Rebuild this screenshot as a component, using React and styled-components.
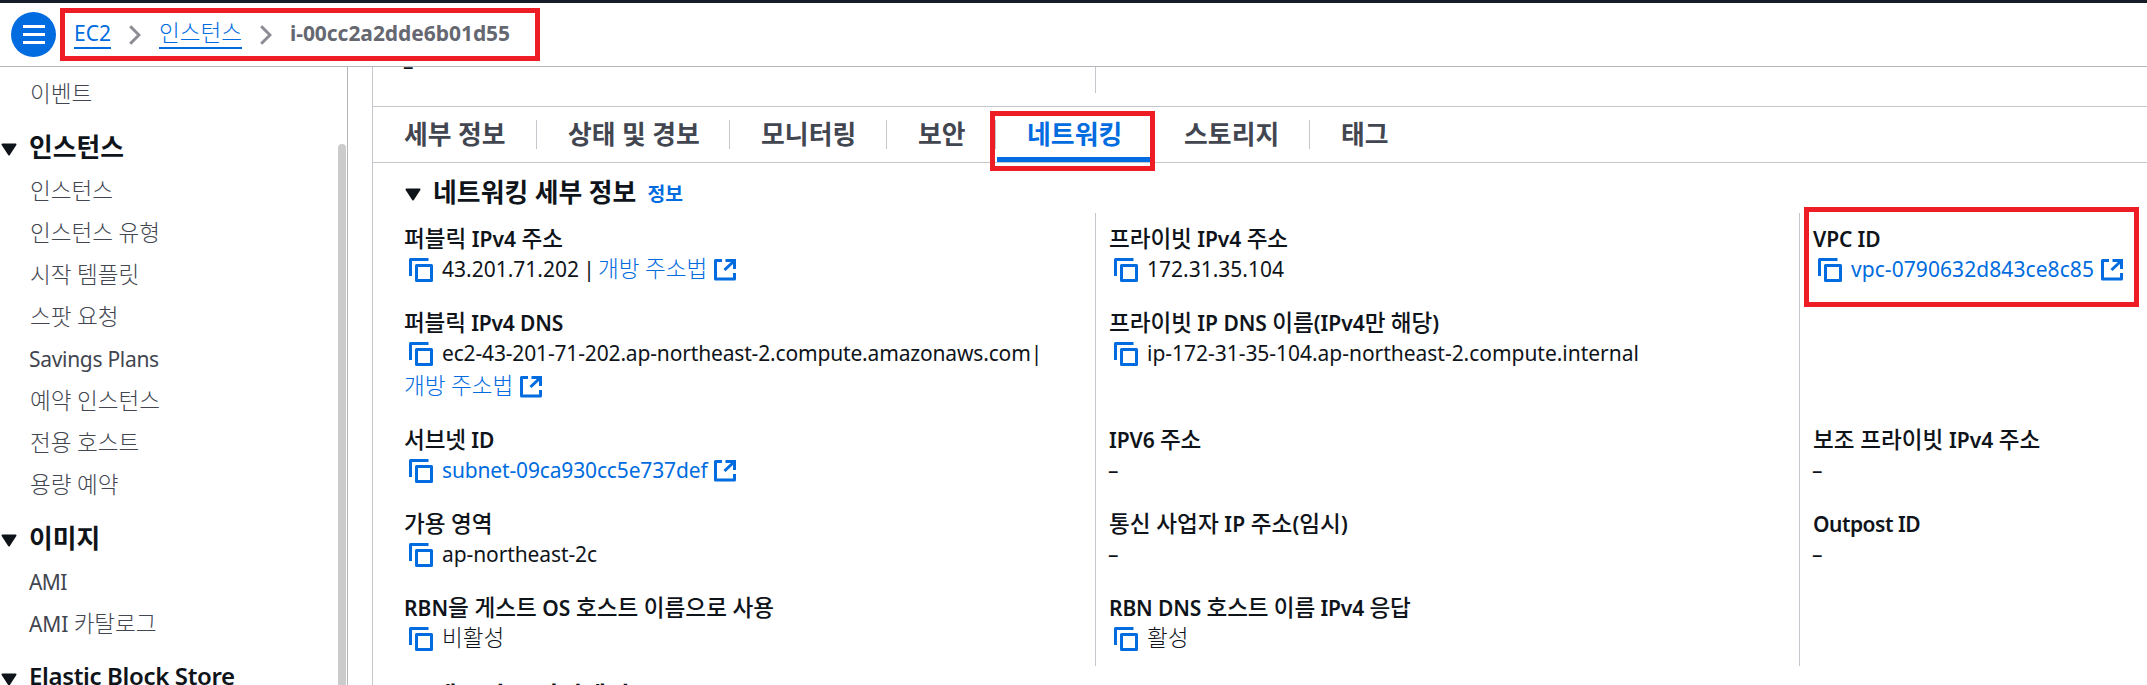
import React from "react";
import styled, { createGlobalStyle } from "styled-components";

const Global = createGlobalStyle`
  * { box-sizing: border-box; }
  body { margin: 0; background: #fff; }
`;

const Page = styled.div`
  position: relative;
  width: 2147px;
  height: 685px;
  overflow: hidden;
  display: flex;
  flex-direction: column;
  background: #fff;
  color: #0f141a;
  font-family: "Noto Sans", "Noto Sans CJK KR", sans-serif;
  font-size: 21px;
  line-height: 32px;
  white-space: nowrap;
`;

/* Mixed Latin and Hangul text */
const Run = styled.span`
  letter-spacing: ${(p) => p.$spacing}px;
`;
const Hangul = styled.span`
  font-family: "Noto Sans CJK KR", sans-serif;
  font-size: 1.075em;
  font-weight: ${(p) => p.$weight};
  line-height: 0;
`;
function Text({ children, spacing = 0, hangul = 300 }) {
  return (
    <Run $spacing={spacing}>
      {children
        .split(/([\uac00-\ud7a3]+)/)
        .filter(Boolean)
        .map((part, i) =>
          /[\uac00-\ud7a3]/.test(part) ? (
            <Hangul key={i} $weight={hangul}>
              {part}
            </Hangul>
          ) : (
            part
          )
        )}
    </Run>
  );
}

/* Top bar */
const TopBar = styled.header`
  flex: none;
  height: 67px;
  display: flex;
  align-items: flex-start;
  border-top: 3px solid #161d26;
  border-bottom: 1px solid #b4b4bb;
  padding-left: 11px;
`;
const MenuButton = styled.button`
  width: 45px;
  height: 45px;
  margin: 9px 18px 0 0;
  padding: 0;
  border: 0;
  border-radius: 50%;
  background: #006ce0;
  display: flex;
  align-items: center;
  justify-content: center;
`;
const Crumbs = styled.nav`
  display: flex;
  align-items: flex-start;
  gap: 18px;
  padding-top: 17px;
  line-height: 27px;
`;
const CrumbLink = styled.a`
  color: #006ce0;
  height: 29px;
  border-bottom: 2px solid #006ce0;
`;
const CrumbCurrent = styled.span`
  color: #656871;
  font-weight: 700;
`;
const Chevron = () => (
  <svg width="12" height="20" viewBox="0 0 12 20" fill="none" stroke="#8c8c94" strokeWidth="3">
    <path d="M1.2 1.2 L10 10 L1.2 18.8" />
  </svg>
);
const ChevronSlot = styled.span`
  display: flex;
  padding-top: 5px;
`;

/* Sidebar */
const Body = styled.div`
  flex: 1;
  min-height: 0;
  display: flex;
`;
const Sidebar = styled.aside`
  flex: none;
  width: 348px;
  display: flex;
  justify-content: space-between;
  border-right: 1px solid #b4b4bb;
  overflow: hidden;
`;
const NavList = styled.div`
  padding-top: 6px;
`;
const NavItem = styled.div`
  height: 42px;
  line-height: 42px;
  padding-left: ${(p) => (p.$latin ? 29 : 30)}px;
  color: #424650;
`;
const NavHeading = styled.div`
  height: 55px;
  padding: ${(p) => (p.$latin ? "13px 0 6px 1px" : "15px 0 4px 1px")};
  display: flex;
  align-items: center;
  gap: 12px;
  font-size: 24px;
  font-weight: 600;
  line-height: 36px;
`;
const CaretSlot = styled.span`
  display: flex;
  padding-top: ${(p) => p.$drop}px;
`;
const Caret = ({ drop }) => (
  <CaretSlot $drop={drop}>
    <svg width="16" height="13" viewBox="0 0 16 13">
      <path d="M1.5 1.5 H14.5 L8 11.5 Z" fill="#0f141a" stroke="#0f141a" strokeWidth="2" strokeLinejoin="round" />
    </svg>
  </CaretSlot>
);
const Scrollbar = styled.div`
  width: 8px;
  height: 560px;
  margin: 77px 1px 0 0;
  border-radius: 4px;
  background: #cbcbcb;
`;

/* Details panel */
const Panel = styled.main`
  flex: 1;
  min-width: 0;
  margin-left: 24px;
  border-left: 1px solid #c6c6cd;
  overflow: hidden;
`;
const Summary = styled.div`
  display: flex;
  height: 40px;
  border-bottom: 1px solid #c6c6cd;
  overflow: hidden;
`;
const SummaryCell = styled.div`
  width: 722px;
  padding-left: 30px;
  margin-top: -17px;
`;
const SummaryRule = styled.div`
  width: 1px;
  height: 26px;
  background: #c6c6cd;
`;
const Tabs = styled.div`
  display: flex;
  height: 56px;
  border-bottom: 1px solid #c6c6cd;
`;
const Tab = styled.div`
  width: ${(p) => p.$width}px;
  height: 55px;
  display: flex;
  align-items: center;
  justify-content: space-between;
  padding-left: 31px;
  color: ${(p) => (p.$active ? "#006ce0" : "#424650")};
  background: ${(p) =>
    p.$active ? "linear-gradient(#006ce0, #006ce0) 1px 100% / 154px 5px no-repeat" : "none"};
  font-size: 24px;
  font-weight: 600;
  line-height: 54px;
`;
const TabRule = styled.i`
  width: 1px;
  height: 29px;
  background: #c6c6cd;
`;
const SectionTitle = styled.h2`
  height: 50px;
  margin: 0;
  padding: 10px 0 0 32px;
  display: flex;
  align-items: flex-start;
  font-size: 24px;
  font-weight: 600;
  line-height: 40px;
`;
const TitleText = styled.span`
  margin-left: 12px;
`;
const InfoLink = styled.a`
  margin-left: 11px;
  font-size: 18px;
  color: #006ce0;
  line-height: 42px;
`;
const Columns = styled.div`
  display: grid;
  grid-template-columns: 722px 704px 1fr;
  height: 453px;
  margin-bottom: 1px;
`;
const Column = styled.div`
  padding: 12px 0 12px ${(p) => (p.$first ? 30 : 12)}px;
  border-left: ${(p) => (p.$first ? "0" : "1px solid #c6c6cd")};
  display: grid;
  grid-template-rows: 84px 117px 84px 84px 60px;
`;
const Field = styled.div`
  display: flex;
  flex-direction: column;
`;
const Label = styled.div`
  height: 28px;
  padding-left: 1px;
  line-height: 28px;
  font-weight: 600;
`;
const Value = styled.div`
  height: 32px;
  display: flex;
`;
const ContinuedValue = styled(Value)`
  padding: 1px 0 0 1px;
`;
const Link = styled.a`
  color: #006ce0;
`;
const Bar = styled.span`
  width: 12px;
  margin: 0 3px 0 ${(p) => (p.$spaced ? 4 : 0)}px;
  text-align: center;
`;
const IconSlot = styled.span`
  display: flex;
  margin: ${(p) => p.$margin};
`;
const CopyIcon = () => (
  <IconSlot $margin="5px 9px 0 6px">
    <svg width="24" height="24" viewBox="0 0 24 24" fill="none" stroke="#006ce0" strokeWidth="3" strokeLinejoin="round">
      <path d="M1.5 18 V1.5 H19.5" />
      <rect x="7.5" y="7.5" width="15" height="15" />
    </svg>
  </IconSlot>
);
const ExternalIcon = () => (
  <IconSlot $margin="6px 0 0 7px">
    <svg width="22" height="22" viewBox="0 0 22 22" fill="none" stroke="#006ce0" strokeWidth="3">
      <path d="M8 1.5 H1.5 V20 H20.5 V14" strokeLinejoin="round" />
      <path d="M11.5 1.5 H20.5 V10" />
      <path d="M20 2 L10.5 11" />
    </svg>
  </IconSlot>
);

/* Red annotation frames drawn over the page */
const Highlight = styled.div`
  position: absolute;
  left: ${(p) => p.$x}px;
  top: ${(p) => p.$y}px;
  width: ${(p) => p.$w}px;
  height: ${(p) => p.$h}px;
  border: 5px solid #ee1c24;
`;

const nav = [
  { text: "이벤트" },
  { heading: "인스턴스" },
  { text: "인스턴스" },
  { text: "인스턴스 유형" },
  { text: "시작 템플릿" },
  { text: "스팟 요청" },
  { text: "Savings Plans", spacing: -0.3, latin: true },
  { text: "예약 인스턴스" },
  { text: "전용 호스트" },
  { text: "용량 예약" },
  { heading: "이미지" },
  { text: "AMI", spacing: -0.6, latin: true },
  { text: "AMI 카탈로그", spacing: -0.1, latin: true },
  { heading: "Elastic Block Store", spacing: -0.35, latin: true },
];

const tabs = [
  { text: "세부 정보", width: 164 },
  { text: "상태 및 경보", width: 193 },
  { text: "모니터링", width: 157 },
  { text: "보안", width: 109 },
  { text: "네트워킹", width: 157, active: true },
  { text: "스토리지", width: 157 },
  { text: "태그", width: 110, last: true },
];

const columns = [
  [
    { label: "퍼블릭 IPv4 주소", copy: true, value: "43.201.71.202", openInline: true },
    {
      label: "퍼블릭 IPv4 DNS",
      ls: -0.15,
      copy: true,
      value: "ec2-43-201-71-202.ap-northeast-2.compute.amazonaws.com",
      vs: -0.16,
      openBelow: true,
    },
    { label: "서브넷 ID", ls: -0.1, copy: true, link: "subnet-09ca930cc5e737def", vs: -0.15 },
    { label: "가용 영역", copy: true, value: "ap-northeast-2c", vs: -0.1 },
    { label: "RBN을 게스트 OS 호스트 이름으로 사용", ls: 0.03, copy: true, value: "비활성" },
  ],
  [
    { label: "프라이빗 IPv4 주소", ls: -0.05, copy: true, value: "172.31.35.104" },
    {
      label: "프라이빗 IP DNS 이름(IPv4만 해당)",
      ls: -0.03,
      copy: true,
      value: "ip-172-31-35-104.ap-northeast-2.compute.internal",
      vs: -0.03,
    },
    { label: "IPV6 주소", ls: -0.1, value: "–" },
    { label: "통신 사업자 IP 주소(임시)", ls: 0.08, value: "–" },
    { label: "RBN DNS 호스트 이름 IPv4 응답", ls: -0.12, copy: true, value: "활성" },
  ],
  [
    { label: "VPC ID", ls: -0.1, copy: true, link: "vpc-0790632d843ce8c85", vs: 0.07 },
    null,
    { label: "보조 프라이빗 IPv4 주소", ls: 0.05, value: "–" },
    { label: "Outpost ID", ls: -0.5, value: "–" },
  ],
];

const OpenAddress = () => (
  <>
    <Link>
      <Text>개방 주소법</Text>
    </Link>
    <ExternalIcon />
  </>
);

function FieldView({ field }) {
  if (!field) return <Field />;
  return (
    <Field>
      <Label>
        <Text hangul={500} spacing={field.ls}>
          {field.label}
        </Text>
      </Label>
      <Value>
        {field.copy && <CopyIcon />}
        {field.value && <Text spacing={field.vs}>{field.value}</Text>}
        {field.link && (
          <>
            <Link>
              <Text spacing={field.vs}>{field.link}</Text>
            </Link>
            <ExternalIcon />
          </>
        )}
        {(field.openInline || field.openBelow) && <Bar $spaced={field.openInline}>|</Bar>}
        {field.openInline && <OpenAddress />}
      </Value>
      {field.openBelow && (
        <ContinuedValue>
          <OpenAddress />
        </ContinuedValue>
      )}
    </Field>
  );
}

function Section({ title }) {
  return (
    <SectionTitle>
      <Caret drop={15} />
      <TitleText>
        <Text hangul={700} spacing={0.1}>
          {title}
        </Text>
      </TitleText>
      <InfoLink>
        <Text hangul={700}>정보</Text>
      </InfoLink>
    </SectionTitle>
  );
}

export default function App() {
  return (
    <Page>
      <Global />
      <TopBar>
        <MenuButton aria-label="menu">
          <svg width="22" height="19" viewBox="0 0 22 19" stroke="#fff" strokeWidth="2.8">
            <path d="M0 1.5 H22 M0 9.5 H22 M0 17.5 H22" />
          </svg>
        </MenuButton>
        <Crumbs>
          <CrumbLink>
            <Text>EC2</Text>
          </CrumbLink>
          <ChevronSlot>
            <Chevron />
          </ChevronSlot>
          <CrumbLink>
            <Text>인스턴스</Text>
          </CrumbLink>
          <ChevronSlot>
            <Chevron />
          </ChevronSlot>
          <CrumbCurrent>
            <Text spacing={-0.05}>i-00cc2a2dde6b01d55</Text>
          </CrumbCurrent>
        </Crumbs>
      </TopBar>

      <Body>
        <Sidebar>
          <NavList>
            {nav.map((n, i) =>
              n.heading ? (
                <NavHeading key={i} $latin={n.latin}>
                  <Caret drop={n.latin ? 6 : 3} />
                  <Text hangul={700} spacing={n.spacing}>
                    {n.heading}
                  </Text>
                </NavHeading>
              ) : (
                <NavItem key={i} $latin={n.latin}>
                  <Text spacing={n.spacing}>{n.text}</Text>
                </NavItem>
              )
            )}
          </NavList>
          <Scrollbar />
        </Sidebar>

        <Panel>
          <Summary>
            <SummaryCell>–</SummaryCell>
            <SummaryRule />
          </Summary>
          <Tabs>
            {tabs.map((t) => (
              <Tab key={t.text} $width={t.width} $active={t.active}>
                <Text hangul={700} spacing={0.1}>
                  {t.text}
                </Text>
                {!t.last && <TabRule />}
              </Tab>
            ))}
          </Tabs>
          <Section title="네트워킹 세부 정보" />
          <Columns>
            {columns.map((fields, i) => (
              <Column key={i} $first={i === 0}>
                {fields.map((f, j) => (
                  <FieldView key={j} field={f} />
                ))}
              </Column>
            ))}
          </Columns>
          <Section title="네트워크 인터페이스" />
        </Panel>
      </Body>

      <Highlight $x={60} $y={8} $w={480} $h={53} />
      <Highlight $x={990} $y={111} $w={165} $h={60} />
      <Highlight $x={1804} $y={207} $w={335} $h={100} />
    </Page>
  );
}
